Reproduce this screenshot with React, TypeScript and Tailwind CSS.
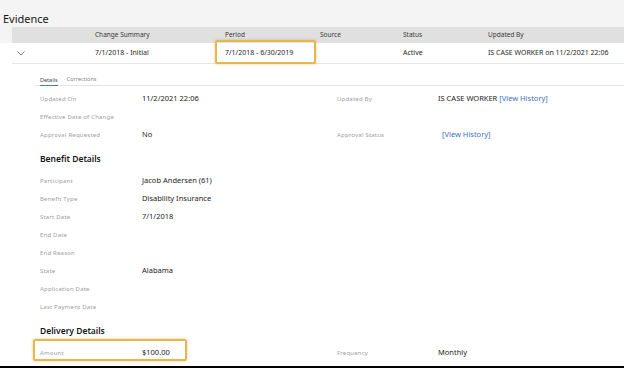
import React from 'react';

const font = { fontFamily: '"Noto Sans", "Liberation Sans", sans-serif' };

interface Field {
  label: string;
  value?: React.ReactNode;
}

const viewHistory = <span className="text-[#3a6fc4]">[View History]</span>;

const Label: React.FC<{ children: React.ReactNode }> = ({ children }) => (
  <span className="text-[6px] text-[#a0a0a0] tracking-[0.2px]">{children}</span>
);

const Value: React.FC<{ children?: React.ReactNode }> = ({ children }) => (
  <span className="text-[7.5px] text-[#1c1c1c]">{children}</span>
);

const Row: React.FC<{ left: Field; right?: Field; highlight?: boolean }> = ({ left, right, highlight }) => (
  <div className="relative h-[18px] flex items-center">
    <div className="w-[102px]"><Label>{left.label}</Label></div>
    <div className="w-[195px]"><Value>{left.value}</Value></div>
    {right && (
      <>
        <div className="w-[101px]"><Label>{right.label}</Label></div>
        <div><Value>{right.value}</Value></div>
      </>
    )}
    {highlight && (
      <div className="absolute -left-[7px] top-[-1px] w-[154px] h-[22px] border-2 border-[#e6b74a] rounded-[2px] shadow-[0_0_3px_rgba(200,150,40,0.5)]" />
    )}
  </div>
);

const Heading: React.FC<{ children: React.ReactNode }> = ({ children }) => (
  <div className="h-[28px] flex items-end pb-[3px]">
    <span className="text-[8.5px] font-semibold text-[#161616] leading-[12px]">{children}</span>
  </div>
);

const benefitFields: Field[] = [
  { label: 'Participant', value: 'Jacob Andersen (61)' },
  { label: 'Benefit Type', value: 'Disability Insurance' },
  { label: 'Start Date', value: '7/1/2018' },
  { label: 'End Date' },
  { label: 'End Reason' },
  { label: 'State', value: 'Alabama' },
  { label: 'Application Date' },
  { label: 'Last Payment Date' },
];

export default function App() {
  return (
    <div className="w-[624px] h-[368px] bg-white flex flex-col overflow-hidden" style={font}>
      {/* Title */}
      <div className="h-[27px] bg-[#f4f4f4] flex items-end pl-[3px] pb-[1px]">
        <span className="text-[11px] text-[#161616] leading-[14px]">Evidence</span>
      </div>

      {/* Table header */}
      <div className="bg-[#f4f4f4] pl-[12px]">
        <div className="h-[16px] bg-[#e0e0e0] grid grid-cols-[83px_130px_95px_83px_85px_1fr] items-center text-[6.5px] text-[#393939]">
          <span></span>
          <span>Change Summary</span>
          <span>Period</span>
          <span>Source</span>
          <span>Status</span>
          <span>Updated By</span>
        </div>
      </div>

      {/* Expanded row */}
      <div className="ml-[12px] h-[21px] border-b border-[#e6e6e6] grid grid-cols-[83px_130px_95px_83px_85px_1fr] items-center text-[7px] text-[#262626]">
        <span className="pl-[5px]">
          <svg width="8" height="5" viewBox="0 0 8 5" fill="none">
            <path d="M0.5 0.5 L4 4 L7.5 0.5" stroke="#555" strokeWidth="0.8" />
          </svg>
        </span>
        <span>7/1/2018 - Initial</span>
        <span className="relative">
          7/1/2018 - 6/30/2019
          <span className="absolute -left-[10px] -top-[8px] w-[101px] h-[24px] border-2 border-[#e6b74a] rounded-[2px] shadow-[0_0_3px_rgba(200,150,40,0.5)]" />
        </span>
        <span></span>
        <span>Active</span>
        <span className="whitespace-nowrap">IS CASE WORKER on 11/2/2021 22:06</span>
      </div>

      {/* Tabs */}
      <div className="ml-[35px] mt-[9px] border-b border-[#e4e4e4] flex items-end gap-[9px] pl-[5px] h-[13px]">
        <span className="text-[5.5px] text-[#444] border-b border-[#4a78c8] pb-[1px] -mb-px">Details</span>
        <span className="text-[5.5px] text-[#8a8a8a] pb-[2px]">Corrections</span>
      </div>

      {/* Details */}
      <div className="pl-[40px] flex flex-col">
        <Row
          left={{ label: 'Updated On', value: '11/2/2021 22:06' }}
          right={{ label: 'Updated By', value: <>IS CASE WORKER {viewHistory}</> }}
        />
        <Row left={{ label: 'Effective Date of Change' }} />
        <Row
          left={{ label: 'Approval Requested', value: 'No' }}
          right={{ label: 'Approval Status', value: <span className="pl-[4px]">{viewHistory}</span> }}
        />

        <Heading>Benefit Details</Heading>
        {benefitFields.map((f) => (
          <Row key={f.label} left={f} />
        ))}

        <Heading>Delivery Details</Heading>
        <Row
          left={{ label: 'Amount', value: '$100.00' }}
          right={{ label: 'Frequency', value: 'Monthly' }}
          highlight
        />
      </div>

      <div className="mt-auto h-[2px] bg-black" />
    </div>
  );
}
